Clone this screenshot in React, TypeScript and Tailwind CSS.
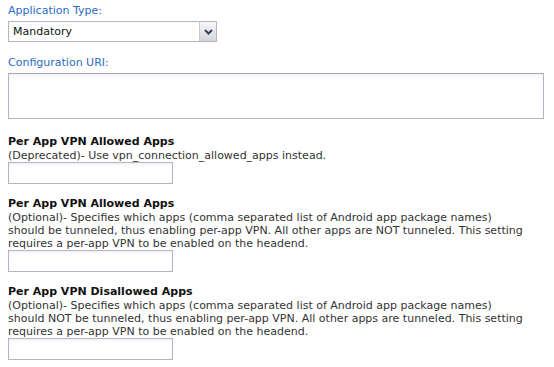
import React from "react";

function Field({ title, lines, top }: { title: string; lines: string[]; top: string }) {
  return (
    <div className={"flex flex-col " + top}>
      <div className="font-bold text-[11px] leading-[15px] text-[#111]">{title}</div>
      <div className="text-[11px] leading-[13px] text-[#333]">
        {lines.map((l, i) => (
          <div key={i}>{l}</div>
        ))}
      </div>
      <div className="w-[165px] h-[22px] border border-[#b5b3c6] bg-white shadow-[inset_0_2px_3px_rgba(0,0,0,0.05)]" />
    </div>
  );
}

export default function App() {
  return (
    <div
      className="w-[554px] h-[367px] bg-white overflow-hidden pl-[8px] pt-[4px]"
      style={{ fontFamily: '"DejaVu Sans", Verdana, sans-serif' }}
    >
      <div className="text-[11px] leading-[13px] text-[#2d6cc0]">Application Type:</div>
      <div className="mt-[4px] w-[209px] h-[21px] border border-[#b5b3c6] flex bg-white">
        <div className="flex-1 text-[11px] leading-[19px] pl-[4px] text-[#111]">Mandatory</div>
        <div className="w-[17px] h-full border-l border-[#c8c8d0] bg-gradient-to-b from-[#f6f6f6] to-[#d6d6d6] flex items-center justify-center">
          <svg width="9" height="6" viewBox="0 0 9 6">
            <path d="M1 1 L4.5 4.5 L8 1" stroke="#2a3f6a" strokeWidth="2" fill="none" />
          </svg>
        </div>
      </div>
      <div className="mt-[14px] text-[11px] leading-[13px] text-[#2d6cc0]">Configuration URI:</div>
      <div className="mt-[4px] w-[536px] h-[46px] border border-[#b5b3c6] border-t-[#a9a6ba] bg-white shadow-[inset_0_3px_5px_rgba(0,0,0,0.05)]" />
      <Field
        top="mt-[15px]"
        title="Per App VPN Allowed Apps"
        lines={["(Deprecated)- Use vpn_connection_allowed_apps instead."]}
      />
      <Field
        top="mt-[12px]"
        title="Per App VPN Allowed Apps"
        lines={[
          "(Optional)- Specifies which apps (comma separated list of Android app package names)",
          "should be tunneled, thus enabling per-app VPN. All other apps are NOT tunneled. This setting",
          "requires a per-app VPN to be enabled on the headend.",
        ]}
      />
      <Field
        top="mt-[12px]"
        title="Per App VPN Disallowed Apps"
        lines={[
          "(Optional)- Specifies which apps (comma separated list of Android app package names)",
          "should NOT be tunneled, thus enabling per-app VPN. All other apps are tunneled. This setting",
          "requires a per-app VPN to be enabled on the headend.",
        ]}
      />
    </div>
  );
}
